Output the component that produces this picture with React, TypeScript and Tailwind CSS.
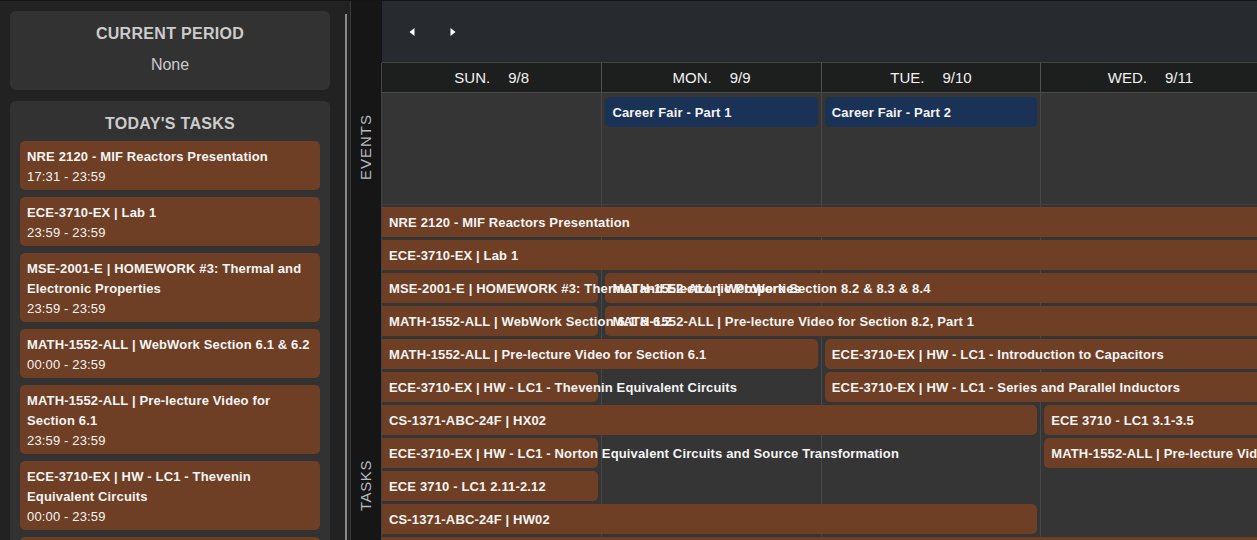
import type { FC } from "react";

type Task = { title: string; time: string };

const todays: Task[] = [
  { title: "NRE 2120 - MIF Reactors Presentation", time: "17:31 - 23:59" },
  { title: "ECE-3710-EX | Lab 1", time: "23:59 - 23:59" },
  { title: "MSE-2001-E | HOMEWORK #3: Thermal and Electronic Properties", time: "23:59 - 23:59" },
  { title: "MATH-1552-ALL | WebWork Section 6.1 & 6.2", time: "00:00 - 23:59" },
  { title: "MATH-1552-ALL | Pre-lecture Video for Section 6.1", time: "23:59 - 23:59" },
  { title: "ECE-3710-EX | HW - LC1 - Thevenin Equivalent Circuits", time: "00:00 - 23:59" },
  { title: "ECE-3710-EX | HW - LC1 - Norton Equivalent Circuits and Source Transformation", time: "00:00 - 23:59" },
];

const days = [
  ["SUN.", "9/8"],
  ["MON.", "9/9"],
  ["TUE.", "9/10"],
  ["WED.", "9/11"],
  ["THU.", "9/12"],
  ["FRI.", "9/13"],
  ["SAT.", "9/14"],
];

const colCls = ["col-start-1", "col-start-2", "col-start-3", "col-start-4", "col-start-5", "col-start-6", "col-start-7"];

type Chip = { place: string; text: string; flatL?: boolean; flatR?: boolean };

// order inside a row matters: chips whose text spills over a neighbour come last
const chips: Chip[] = [
  { place: "row-start-1 col-start-1 col-end-8", text: "NRE 2120 - MIF Reactors Presentation", flatL: true, flatR: true },
  { place: "row-start-2 col-start-1 col-end-8", text: "ECE-3710-EX | Lab 1", flatL: true, flatR: true },
  { place: "row-start-3 col-start-2 col-end-8", text: "MATH-1552-ALL | WebWork Section 8.2 & 8.3 & 8.4", flatR: true },
  { place: "row-start-3 col-start-1 col-end-2", text: "MSE-2001-E | HOMEWORK #3: Thermal and Electronic Properties", flatL: true },
  { place: "row-start-4 col-start-2 col-end-8", text: "MATH-1552-ALL | Pre-lecture Video for Section 8.2, Part 1", flatR: true },
  { place: "row-start-4 col-start-1 col-end-2", text: "MATH-1552-ALL | WebWork Section 6.1 & 6.2", flatL: true },
  { place: "row-start-5 col-start-1 col-end-3", text: "MATH-1552-ALL | Pre-lecture Video for Section 6.1", flatL: true },
  { place: "row-start-5 col-start-3 col-end-8", text: "ECE-3710-EX | HW - LC1 - Introduction to Capacitors", flatR: true },
  { place: "row-start-6 col-start-3 col-end-8", text: "ECE-3710-EX | HW - LC1 - Series and Parallel Inductors", flatR: true },
  { place: "row-start-6 col-start-1 col-end-2", text: "ECE-3710-EX | HW - LC1 - Thevenin Equivalent Circuits", flatL: true },
  { place: "row-start-7 col-start-1 col-end-4", text: "CS-1371-ABC-24F | HX02", flatL: true },
  { place: "row-start-7 col-start-4 col-end-8", text: "ECE 3710 - LC1 3.1-3.5", flatR: true },
  { place: "row-start-8 col-start-4 col-end-8", text: "MATH-1552-ALL | Pre-lecture Video for Section 8.3", flatR: true },
  { place: "row-start-8 col-start-1 col-end-2", text: "ECE-3710-EX | HW - LC1 - Norton Equivalent Circuits and Source Transformation", flatL: true },
  { place: "row-start-9 col-start-1 col-end-2", text: "ECE 3710 - LC1 2.11-2.12", flatL: true },
  { place: "row-start-10 col-start-1 col-end-4", text: "CS-1371-ABC-24F | HW02", flatL: true },
  { place: "row-start-11 col-start-1 col-end-8", text: "ECE-3710-EX | HW - LC1 - Capacitors", flatL: true, flatR: true },
];

const Arrow: FC<{ dir: "l" | "r" }> = ({ dir }) => (
  <svg width="6" height="8" viewBox="0 0 6 8">
    <polygon points={dir === "l" ? "5.5,0 5.5,8 0.5,4" : "0.5,0 0.5,8 5.5,4"} fill="#ffffff" />
  </svg>
);

const ColumnLines: FC = () => (
  <>
    {colCls.map((c, i) => (
      <div key={c} className={`${c} row-span-full ${i > 0 ? "border-l border-[#474747]" : ""}`} />
    ))}
  </>
);

export default function App() {
  return (
    <div className="flex h-[540px] w-[1257px] overflow-hidden border-t border-[#141414] bg-[#222222] font-['Liberation_Sans',Arial,sans-serif]">
      {/* sidebar */}
      <aside className="flex w-[351px] shrink-0 border-r border-[#3c3c3c] pl-[10px] pt-[10px]">
        <div className="flex w-[320px] shrink-0 flex-col gap-[11px]">
          <div className="rounded-[6px] bg-[#323232] pt-[13px] pb-[15px] text-center text-[#cccccc]">
            <h2 className="text-[16px] font-bold leading-[20px] tracking-[0.3px]">CURRENT PERIOD</h2>
            <p className="mt-[11px] text-[16px] leading-[20px]">None</p>
          </div>
          <div className="rounded-[6px] bg-[#323232] px-[10px] pt-[13px] pb-[10px]">
            <h2 className="mb-[7px] text-center text-[16px] font-bold leading-[20px] tracking-[0.3px] text-[#cccccc]">TODAY'S TASKS</h2>
            <div className="flex flex-col gap-[7px]">
              {todays.map((t) => (
                <div key={t.title} className="rounded-[5px] bg-[#6e3f24] px-[7px] pt-[6px] pb-[3px] text-[13px] leading-[20px] tracking-[0.15px] text-[#f4f4f4]">
                  <div className="font-bold">{t.title}</div>
                  <div>{t.time}</div>
                </div>
              ))}
            </div>
          </div>
        </div>
        <div className="ml-[15px] mt-[3px] w-[2px] shrink-0 bg-[#8a8a8a]" />
      </aside>

      {/* row labels */}
      <div className="flex w-[31px] shrink-0 flex-col bg-[#161616]">
        <div className="h-[62px] shrink-0" />
        <div className="flex flex-1 flex-col border-r border-[#444444]">
          <div className="flex h-[142px] shrink-0 items-center justify-center pt-[26px]">
            <span className="rotate-180 text-[15px] tracking-[1px] text-[#b5bac0] [writing-mode:vertical-rl]">EVENTS</span>
          </div>
          <div className="flex h-[561px] shrink-0 items-center justify-center">
            <span className="rotate-180 text-[15px] tracking-[0.6px] text-[#b5bac0] [writing-mode:vertical-rl]">TASKS</span>
          </div>
        </div>
      </div>

      {/* calendar */}
      <main className="flex min-w-0 flex-1 flex-col overflow-hidden">
        <div className="flex h-[62px] shrink-0 items-center gap-[35px] border-b border-[#444444] bg-[#272a2f] pl-[27px]">
          <button className="flex"><Arrow dir="l" /></button>
          <button className="flex"><Arrow dir="r" /></button>
        </div>

        <div className="grid h-[30px] shrink-0 grid-cols-[repeat(7,219.4px)] border-b border-[#4a4a4a] bg-[#1d1e1e] text-[15px] text-[#f2f2f2]">
          {days.map(([d, n], i) => (
            <div key={d} className={`flex items-center justify-center gap-[18px] pt-[2px] ${i > 0 ? "border-l border-[#505050]" : ""}`}>
              <span>{d}</span>
              <span>{n}</span>
            </div>
          ))}
        </div>

        <div className="grid h-[112px] shrink-0 grid-cols-[repeat(7,219.4px)] grid-rows-[111px] border-b border-[#404040] bg-[#353535]">
          <ColumnLines />
          <div className="col-start-2 row-start-1 mt-[4px] ml-[4px] mr-[3px] flex h-[30px] items-center self-start rounded-[5px] bg-[#1a3256] px-[7px] pt-[2px] text-[13px] font-bold tracking-[0.15px] text-[#f4f4f4]">
            Career Fair - Part 1
          </div>
          <div className="col-start-3 row-start-1 mt-[4px] ml-[4px] mr-[3px] flex h-[30px] items-center self-start rounded-[5px] bg-[#1a3256] px-[7px] pt-[2px] text-[13px] font-bold tracking-[0.15px] text-[#f4f4f4]">
            Career Fair - Part 2
          </div>
        </div>

        <div className="grid shrink-0 grid-cols-[repeat(7,219.4px)] grid-rows-[repeat(12,33px)] bg-[#353535]">
          <ColumnLines />
          {chips.map((c) => (
            <div
              key={c.text}
              className={`${c.place} mt-[2px] flex h-[30px] min-w-0 items-center self-start overflow-visible whitespace-nowrap rounded-[5px] bg-[#6e3f24] px-[7px] pt-[2px] text-[13px] font-bold tracking-[0.15px] text-[#f4f4f4] ${c.flatL ? "rounded-l-none" : "ml-[4px]"} ${c.flatR ? "rounded-r-none" : "mr-[3px]"}`}
            >
              {c.text}
            </div>
          ))}
        </div>
      </main>
    </div>
  );
}
